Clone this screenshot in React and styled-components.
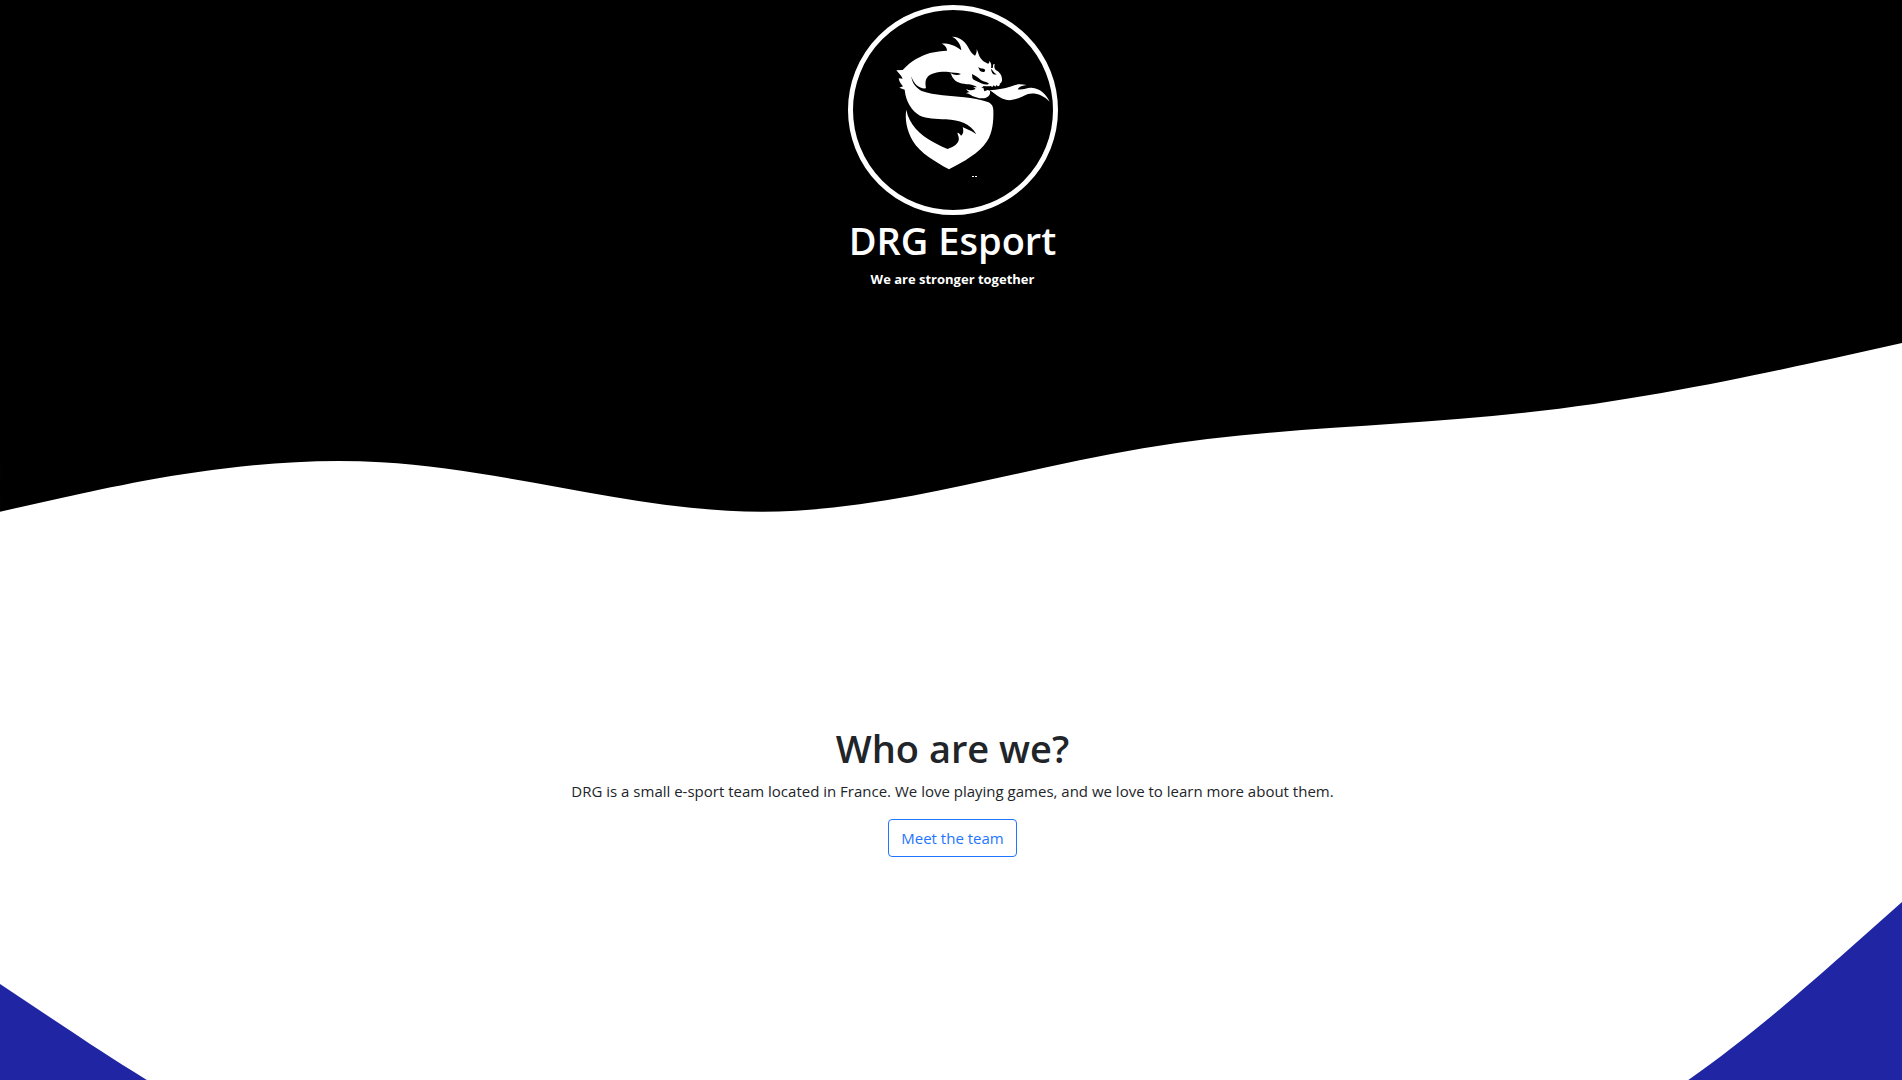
import React from 'react';
import styled, { createGlobalStyle } from 'styled-components';

const GlobalStyle = createGlobalStyle`
  *, *::before, *::after { box-sizing: border-box; }
  body {
    margin: 0;
    overflow: hidden;
    background: #fff;
    color: #212529;
    font-family: 'Open Sans', 'Noto Sans', sans-serif;
    font-size: 15px;
    line-height: 24px;
  }
`;

const Page = styled.div`
  width: calc(100% + 3px);
  height: 100vh;
  overflow: hidden;
`;

const Header = styled.header`
  display: flex;
  flex-direction: column;
  align-items: center;
  padding: 5px 0 13px;
  background: #000;
  color: #fff;
`;

const Logo = styled.svg`
  display: block;
  width: 210px;
  height: 210px;
  border: 5px solid #fff;
  border-radius: 50%;
`;

const Title = styled.h1`
  margin: 0 0 8px;
  padding-top: 2px;
  font-size: 38px;
  font-weight: 600;
  line-height: 46px;
`;

const Tagline = styled.p`
  margin: 0;
  font-size: 13px;
  font-weight: 700;
  line-height: 16px;
`;

const Wave = styled.svg`
  display: block;
  width: 100%;
  fill: ${(p) => p.$color};
`;

const About = styled.section`
  display: flex;
  flex-direction: column;
  align-items: center;
`;

const Lead = styled.p`
  margin: 0 0 16px;
`;

const Button = styled.button`
  padding: 6px 12px;
  border: 1px solid #1f75fe;
  border-radius: 4px;
  background: transparent;
  color: #1f75fe;
  font: inherit;
  cursor: pointer;
`;

const Dragon = () => (
  <Logo viewBox="39 29 600 600" role="img" aria-label="DRG dragon logo">
    <g fill="#fff">
      <path d="M169 210 L188 209 C212 183 240 167 270 158 C288 154 306 152 321 151 C321 143 317 135 306 130 C322 129 342 133 364 150 C363 134 352 116 336 109 C362 109 378 126 387 145 C392 155 398 162 405 166 C409 160 411 154 410 146 C415 156 416 166 422 174 C428 183 437 187 444 190 C448 188 449 185 447 181 C454 187 455 194 453 202 C457 205 460 202 459 197 C459 193 461 190 464 192 C462 199 463 205 468 210 C477 214 485 223 486 235 C487 243 484 248 479 250 C481 253 478 257 473 258 L470 254 L466 259 L461 255 L457 260 L452 257 C444 259 436 257 431 257 L424 263 L430 262 L433 273 L443 269 L450 271 C452 280 448 288 438 292 C425 297 408 292 397 287 C391 284 386 279 378 279 C382 276 386 276 389 276 C384 273 380 270 379 266 C388 272 397 270 407 266 C405 263 402 261 399 260 L411 261 C407 256 397 254 387 252 C367 251 347 247 339 233 C335 228 334 222 331 218 C341 224 353 226 363 221 C351 216 338 218 325 215 C299 213 270 219 261 232 C254 243 257 254 258 264 C241 267 221 253 214 228 C216 249 228 263 245 272 C285 286 330 286 373 291 C398 294 421 298 441 304 C454 308 460 317 460 330 C461 363 458 397 441 423 C416 460 373 483 327 507 C285 483 240 458 218 421 C200 390 194 355 199 328 C207 373 240 403 278 424 C293 432 308 440 323 446 C341 440 354 431 356 420 C358 412 354 405 352 397 C357 398 360 400 363 406 C371 400 371 391 368 379 C377 387 391 387 409 402 C391 370 359 359 318 357 C287 355 260 355 240 346 C216 333 197 303 194 268 L178 262 L189 258 C184 252 178 246 176 234 L188 235 C184 227 177 219 169 210 Z" />
      <path d="M449 270 C471 268 500 264 517 257 C532 250 544 252 560 254 C548 255 537 259 533 267 C549 270 561 261 574 262 C602 264 618 281 629 304 C609 283 584 276 564 281 C543 290 521 302 501 299 C480 296 466 280 449 270 Z" />
      <rect x="396" y="527" width="6" height="3" />
      <rect x="405" y="527" width="6" height="3" />
    </g>
    <g fill="#000">
      <path d="M396 221 C402 225 414 230 420 237 C426 244 438 243 447 250 C440 256 425 251 417 246 C409 240 398 239 397 232 Z" />
      <path d="M414 199 C421 207 429 201 435 208 C438 217 423 217 419 210 Z" />
      <path d="M453 205 C460 211 461 218 470 222 C460 225 454 217 453 205 Z" />
    </g>
  </Logo>
);

export default function App() {
  return (
    <>
      <GlobalStyle />
      <Page>
        <Header>
          <Dragon />
          <Title>DRG Esport</Title>
          <Tagline>We are stronger together</Tagline>
        </Header>
        <Wave $color="#000" viewBox="0 0 1440 320" aria-hidden="true">
          <path d="M0,160L48,149.3C96,139,192,117,288,122.7C384,128,480,160,576,160C672,160,768,128,864,112C960,96,1056,96,1152,85.3C1248,75,1344,53,1392,42.7L1440,32L1440,0L0,0Z" />
        </Wave>
        <About>
          <Title as="h2">Who are we?</Title>
          <Lead>
            DRG is a small e-sport team located in France. We love playing games, and we love to
            learn more about them.
          </Lead>
          <Button type="button">Meet the team</Button>
        </About>
        <Wave $color="#1f25a3" viewBox="0 0 1440 320" aria-hidden="true">
          <path d="M0,96L48,128C96,160,192,224,288,250.7C384,277,480,267,576,256C672,245,768,235,864,240C960,245,1056,267,1152,234.7C1248,203,1344,117,1392,74.7L1440,32L1440,320L0,320Z" />
        </Wave>
      </Page>
    </>
  );
}
